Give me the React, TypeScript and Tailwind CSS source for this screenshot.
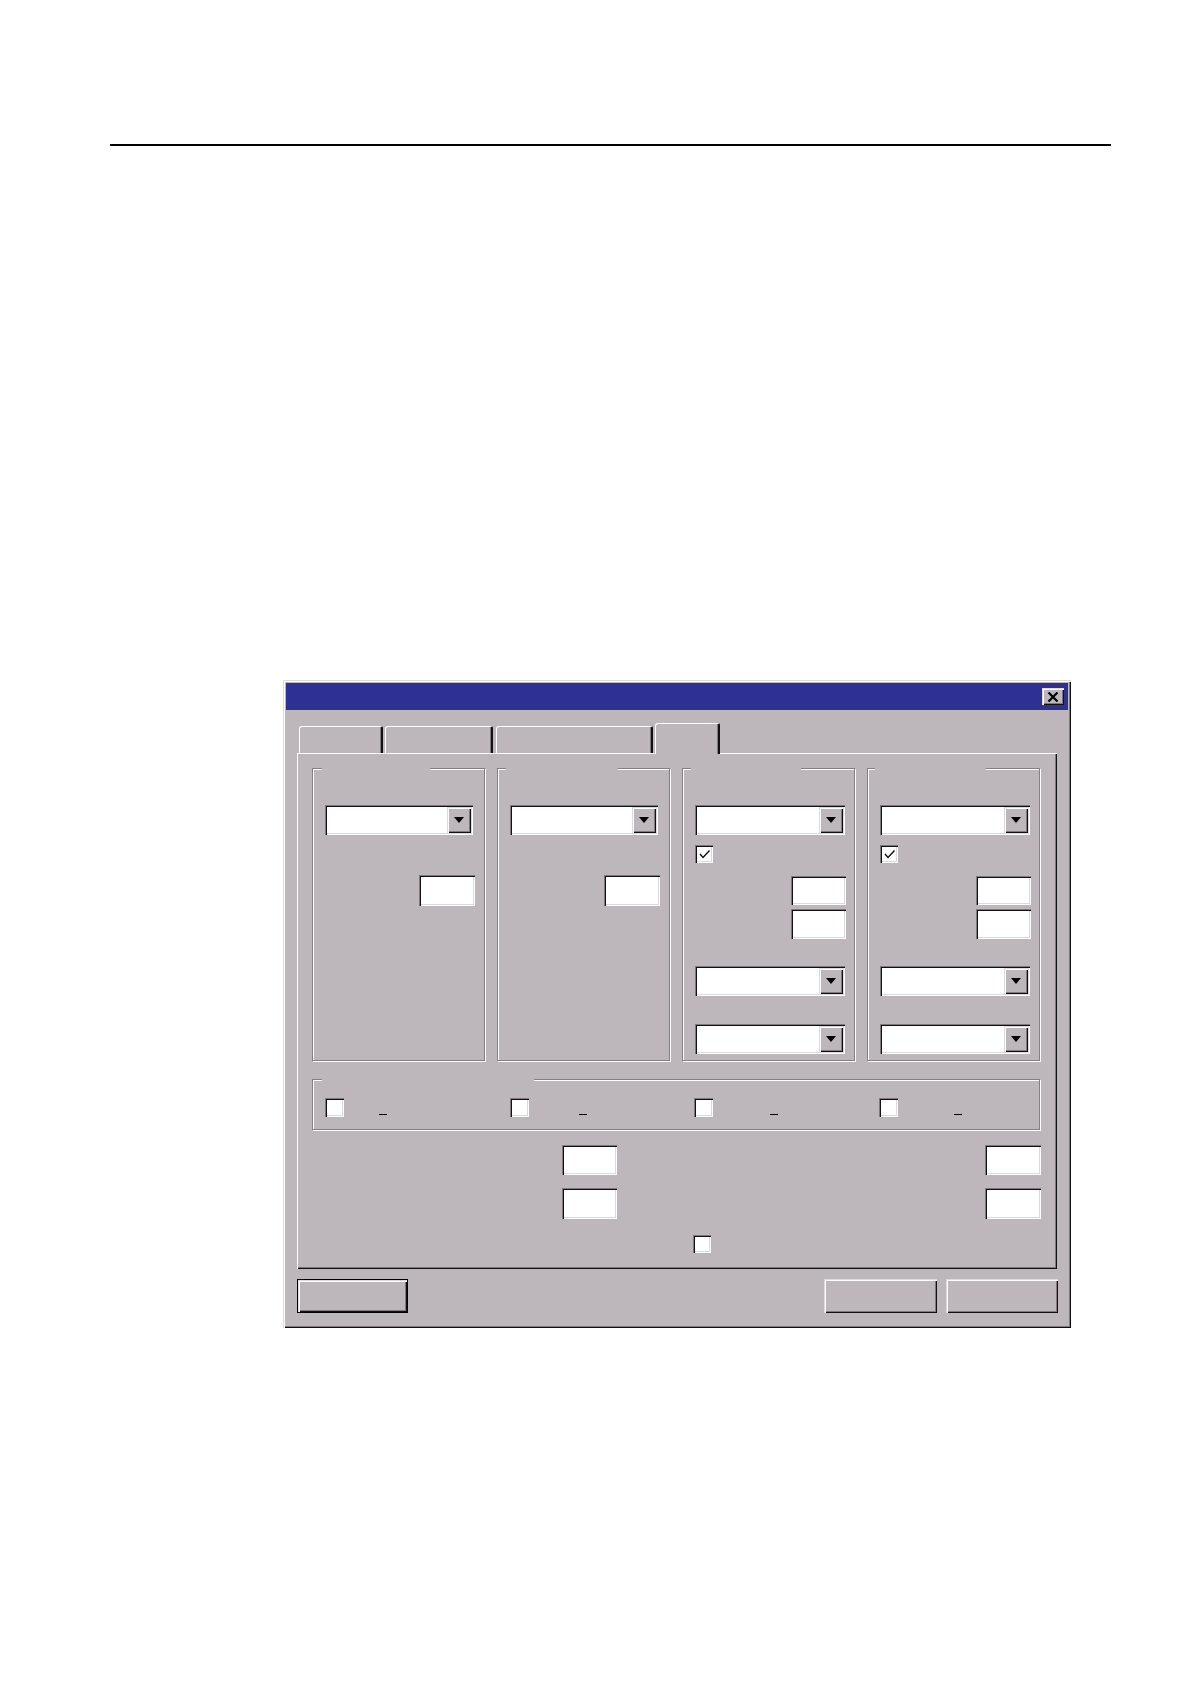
const raised =
  'bg-[#bdb6ba] shadow-[inset_1px_1px_0_#dedadc,inset_2px_2px_0_#ffffff,inset_-1px_-1px_0_#111111,inset_-2px_-2px_0_#7f787c]'
const sunken =
  'bg-white shadow-[inset_1px_1px_0_#7f787c,inset_2px_2px_0_#111111,inset_-1px_-1px_0_#ffffff,inset_-2px_-2px_0_#dedadc]'
const etched = 'relative border border-[#857f83] shadow-[inset_1px_1px_0_#ffffff,1px_1px_0_#ffffff]'

function Combo({ className = '' }: { className?: string }) {
  return (
    <div className={`flex h-[30px] w-[148px] p-[2px] ${sunken} ${className}`}>
      <div className="flex-1" />
      <div className={`flex w-[24px] items-center justify-center ${raised}`}>
        <svg width="10" height="6" viewBox="0 0 10 6">
          <polygon points="0,0 10,0 5,6" fill="#000" />
        </svg>
      </div>
    </div>
  )
}

function TextBox({ className = '' }: { className?: string }) {
  return <div className={`${sunken} ${className}`} />
}

function Check({ checked = false, className = '' }: { checked?: boolean; className?: string }) {
  return (
    <div className={`flex h-[18px] w-[18px] items-center justify-center ${sunken} ${className}`}>
      {checked && (
        <svg width="14" height="14" viewBox="0 0 14 14">
          <path d="M3 7 L6 10.5 L12.5 3.5" fill="none" stroke="#111" strokeWidth="1.4" />
        </svg>
      )}
    </div>
  )
}

// blank caption gap in a group box frame
function Caption({ left, width }: { left: number; width: number }) {
  return (
    <span
      className="absolute top-[-2px] h-[4px] bg-[#bdb6ba]"
      style={{ left, width }}
    />
  )
}

function SimpleGroup({ gap }: { gap: [number, number] }) {
  return (
    <div className={`${etched} flex h-[293px] flex-col pl-[12px] pt-[36px]`}>
      <Caption left={gap[0]} width={gap[1]} />
      <Combo />
      <TextBox className="mr-[9px] mt-[40px] h-[31px] w-[56px] self-end" />
    </div>
  )
}

function OptionGroup({ gap }: { gap: [number, number] }) {
  return (
    <div className={`${etched} flex h-[293px] flex-col pl-[12px] pt-[36px]`}>
      <Caption left={gap[0]} width={gap[1]} />
      <Combo className="w-[150px]" />
      <Check checked className="mt-[10px]" />
      <TextBox className="mr-[8px] mt-[13px] h-[29px] w-[55px] self-end" />
      <TextBox className="mr-[8px] mt-[4px] h-[30px] w-[55px] self-end" />
      <Combo className="mt-[27px] w-[150px]" />
      <Combo className="mt-[28px] w-[150px]" />
    </div>
  )
}

function Tab({ width, active = false, ml }: { width: number; active?: boolean; ml: number }) {
  return (
    <div
      className={`rounded-tl-[3px] rounded-tr-[2px] border-l border-t border-l-white border-t-white shadow-[inset_-1px_0_0_#7f787c] border-r-2 border-r-[#111] bg-[#bdb6ba] ${
        active ? 'relative z-10 -mb-px h-[31px]' : 'h-[27px]'
      }`}
      style={{ width, marginLeft: ml }}
    />
  )
}

export default function App() {
  return (
    <div className="min-h-[1684px] w-[1190px] bg-white font-['Liberation_Sans',Arial,sans-serif]">
      <div className="h-[144px]" />
      <div className="ml-[110px] h-[2px] w-[1001px] bg-black" />

      <div
        className="ml-[283px] mt-[534px] w-[788px] bg-[#bdb6ba] p-[3px] shadow-[inset_1px_1px_0_#dedadc,inset_2px_2px_0_#ffffff,inset_-1px_-1px_0_#111111,inset_-2px_-2px_0_#7f787c]"
      >
        {/* title bar */}
        <div className="flex h-[27px] items-center justify-end bg-[#2e3192] pr-[4px]">
          <div className={`flex h-[17px] w-[22px] items-center justify-center ${raised}`}>
            <svg width="12" height="10" viewBox="0 0 12 10">
              <path d="M1.5 0.5 L10.5 9.5 M10.5 0.5 L1.5 9.5" stroke="#000" strokeWidth="2.2" />
            </svg>
          </div>
        </div>

        <div className="px-[11px] pb-[12px]">
          {/* tabs */}
          <div className="mt-[13px] flex h-[30px] items-end">
            <Tab width={84} ml={2} />
            <Tab width={108} ml={2} />
            <Tab width={157} ml={3} />
            <Tab width={65} ml={2} active />
          </div>

          {/* tab page */}
          <div className="h-[516px] w-[760px] pl-[15px] pt-[15px] shadow-[inset_1px_1px_0_#ffffff,inset_-1px_-1px_0_#111111,inset_-2px_-2px_0_#7f787c]">
            <div className="grid w-[728px] grid-cols-4 gap-x-[12px]">
              <SimpleGroup gap={[9, 108]} />
              <SimpleGroup gap={[8, 112]} />
              <OptionGroup gap={[8, 110]} />
              <OptionGroup gap={[7, 111]} />
            </div>

            <div className={`${etched} mt-[18px] grid h-[51px] w-[728px] grid-cols-4 items-start gap-x-[12px] pt-[18px]`}>
              <Caption left={9} width={212} />
              {[54, 69, 76, 75].map((u, i) => (
                <div key={i} className="flex items-end pl-[12px]">
                  <Check className="h-[19px] w-[19px]" />
                  <span className="mb-[2px] h-px w-[8px] bg-black" style={{ marginLeft: u - 19 }} />
                </div>
              ))}
            </div>

            <div className="mt-[15px] flex">
              <TextBox className="ml-[250px] h-[30px] w-[55px]" />
              <TextBox className="ml-[368px] h-[30px] w-[56px]" />
            </div>
            <div className="mt-[13px] flex">
              <TextBox className="ml-[250px] h-[31px] w-[55px]" />
              <TextBox className="ml-[368px] h-[31px] w-[56px]" />
            </div>
            <div className="mt-[16px] flex">
              <Check className="ml-[381px]" />
            </div>
          </div>

          {/* buttons */}
          <div className="mt-[10px] flex justify-between">
            <div className="h-[34px] w-[111px] border border-black">
              <div className={`h-full w-full ${raised}`} />
            </div>
            <div className="mr-[-1px] flex gap-[9px]">
              <div className={`h-[34px] w-[113px] ${raised}`} />
              <div className={`h-[34px] w-[112px] ${raised}`} />
            </div>
          </div>
        </div>
      </div>
    </div>
  )
}
